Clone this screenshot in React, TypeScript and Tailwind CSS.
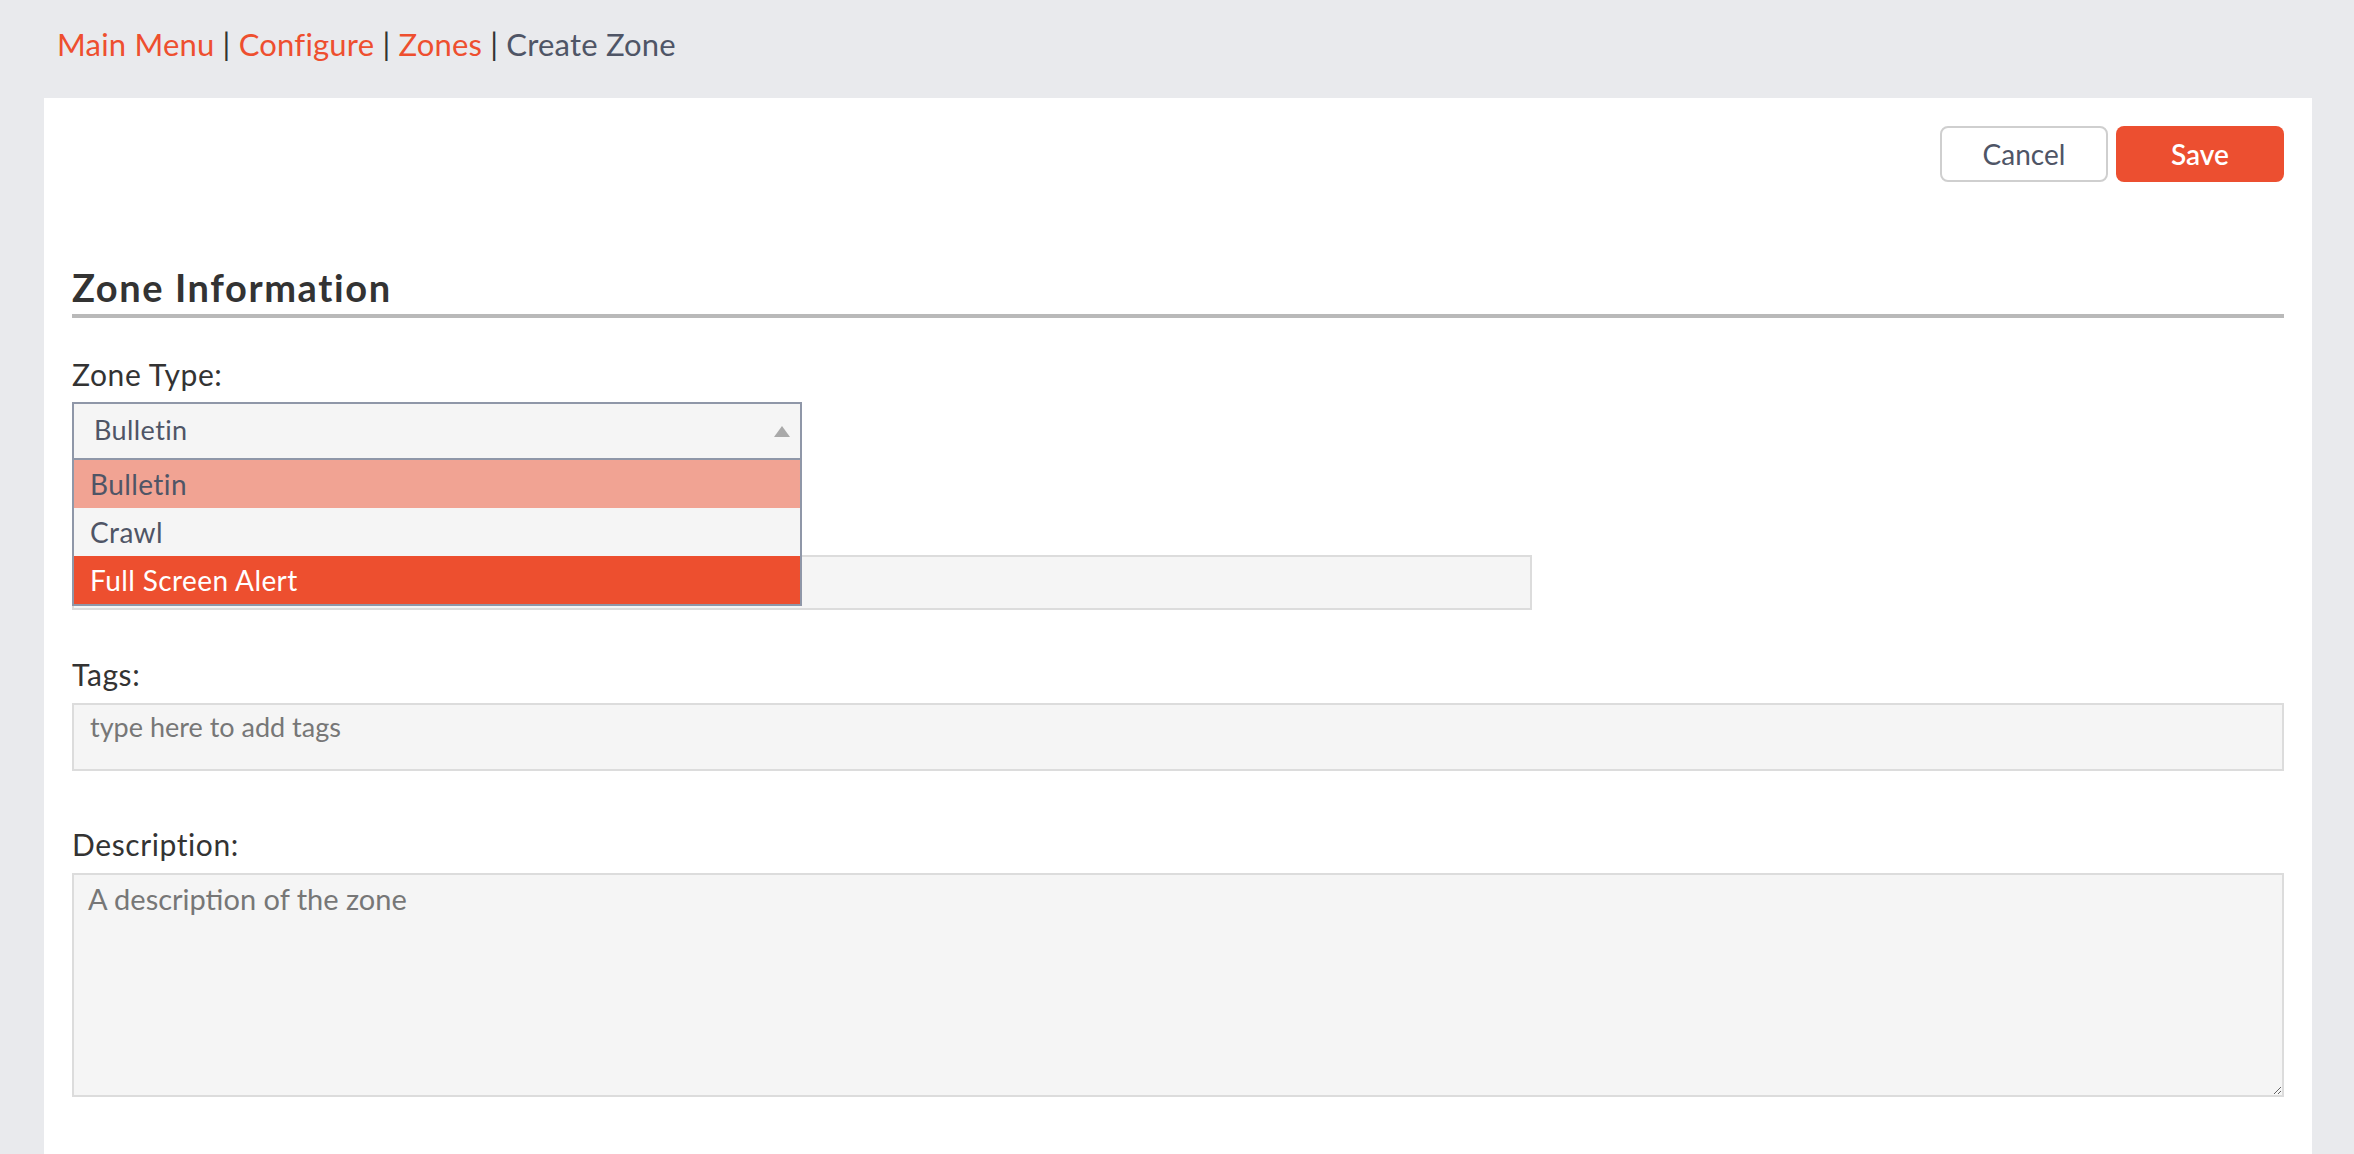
import React from "react";

const zoneTypes = ["Bulletin", "Crawl", "Full Screen Alert"];

function Breadcrumbs() {
  const links = ["Main Menu", "Configure", "Zones"];
  return (
    <div className="h-[98px] pl-[57px] pt-[24px] text-[31px] leading-[40px] tracking-[0.2px]">
      {links.map((l) => (
        <React.Fragment key={l}>
          <a className="text-[#ee4f2f]">{l}</a>
          <span className="text-[#333]"> | </span>
        </React.Fragment>
      ))}
      <span className="text-[#4f5566]">Create Zone</span>
    </div>
  );
}

function ZoneTypeSelect() {
  const selected = "Bulletin";
  const active = "Full Screen Alert";
  return (
    <div className="relative w-[730px] h-[60px] mt-[10px]">
      <div className="absolute left-0 top-0 z-10 w-full border-2 border-[#8f97a8] bg-[#f5f5f5]">
        <div className="flex h-[56px] items-center justify-between border-b-2 border-[#8f97a8] pl-[20px] pr-[10px] pb-[2px] text-[27px] tracking-[0.4px] text-[#4f5566]">
          <span>{selected}</span>
          <svg width="16" height="11" viewBox="0 0 16 11" className="mt-[2px]">
            <polygon points="8,0 16,11 0,11" fill="#a9a9a9" />
          </svg>
        </div>
        {zoneTypes.map((t) => (
          <div
            key={t}
            className={
              t === active
                ? "h-[48px] pl-[16px] flex items-center text-[28px] tracking-[0.4px] bg-[#ed4f2f] text-white"
                : t === selected
                ? "h-[48px] pl-[16px] flex items-center text-[28px] tracking-[0.4px] bg-[#f1a393] text-[#4f5566]"
                : "h-[48px] pl-[16px] flex items-center text-[28px] tracking-[0.4px] bg-[#f5f5f5] text-[#4f5566]"
            }
          >
            {t}
          </div>
        ))}
      </div>
    </div>
  );
}

export default function App() {
  return (
    <div className="min-h-screen bg-[#e9eaed] font-['Lato',sans-serif] flex flex-col">
      <Breadcrumbs />
      <div className="flex-1 ml-[44px] mr-[42px] bg-white px-[28px] pt-[28px] pb-[40px]">
        <div className="flex justify-end gap-[8px]">
          <button className="w-[168px] h-[56px] rounded-[8px] border-2 border-[#cfcfcf] bg-white text-[28px] text-[#4f5566]">
            Cancel
          </button>
          <button className="w-[168px] h-[56px] rounded-[8px] bg-[#ec4f30] text-[28px] font-semibold text-white">
            Save
          </button>
        </div>

        <h2 className="mt-[83px] pb-[5px] border-b-4 border-[#b9b9b9] text-[38px] leading-[44px] font-bold tracking-[1.6px] text-[#333]">
          Zone Information
        </h2>

        <label className="block mt-[38px] text-[30px] leading-[36px] tracking-[0.6px] text-[#333]">Zone Type:</label>
        <ZoneTypeSelect />

        {/* label sits under the open dropdown */}
        <label className="block mt-[47px] text-[30px] leading-[36px] tracking-[0.6px] text-[#333]">Zone Name:</label>
        <div className="mt-[10px] w-[1460px] h-[55px] border-2 border-[#dcdcdc] bg-[#f5f5f5]" />

        <label className="block mt-[46px] text-[30px] leading-[36px] tracking-[0.6px] text-[#333]">Tags:</label>
        <div className="mt-[11px] h-[68px] border-2 border-[#dcdcdc] bg-[#f5f5f5] pl-[16px] pt-[6px] text-[27px] leading-[32px] text-[#777]">
          type here to add tags
        </div>

        <label className="block mt-[55px] text-[30px] leading-[36px] tracking-[0.6px] text-[#333]">Description:</label>
        <textarea
          placeholder="A description of the zone"
          className="block mt-[11px] w-full h-[224px] border-2 border-[#dcdcdc] bg-[#f5f5f5] pl-[14px] pt-[8px] text-[29px] leading-[32px] text-[#333] placeholder:text-[#777] outline-none"
        />
      </div>
    </div>
  );
}
